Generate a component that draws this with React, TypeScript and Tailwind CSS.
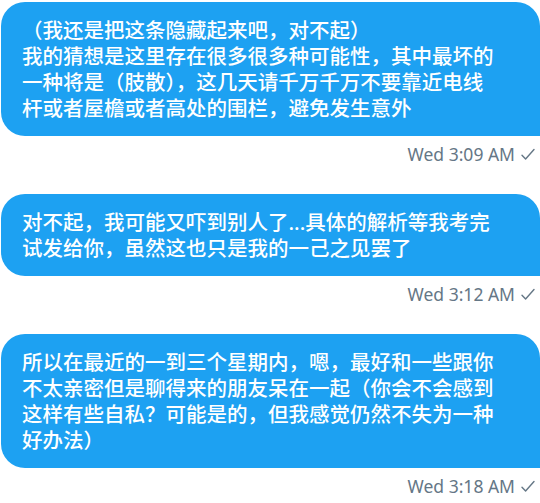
import { Fragment } from "react";

const messages = [
  {
    lines: [
      "（我还是把这条隐藏起来吧，对不起）",
      "我的猜想是这里存在很多很多种可能性，其中最坏的",
      "一种将是（肢散），这几天请千万千万不要靠近电线",
      "杆或者屋檐或者高处的围栏，避免发生意外",
    ],
    time: "Wed 3:09 AM",
  },
  {
    lines: [
      "对不起，我可能又吓到别人了...具体的解析等我考完",
      "试发给你，虽然这也只是我的一己之见罢了",
    ],
    time: "Wed 3:12 AM",
  },
  {
    lines: [
      "所以在最近的一到三个星期内，嗯，最好和一些跟你",
      "不太亲密但是聊得来的朋友呆在一起（你会不会感到",
      "这样有些自私？可能是的，但我感觉仍然不失为一种",
      "好办法）",
    ],
    time: "Wed 3:18 AM",
  },
];

function Check() {
  return (
    <svg width="14" height="13" viewBox="0 0 14 13" fill="none" className="ml-[6px]">
      <path d="M1 7.2 L4.6 11 L13 1.5" stroke="#657786" strokeWidth="1.4" strokeLinecap="round" strokeLinejoin="round" />
    </svg>
  );
}

export default function App() {
  return (
    <div
      className="w-[540px] h-[503px] bg-white overflow-hidden pt-[2px] pl-px"
      style={{ fontFamily: '"Noto Sans", "Noto Sans CJK SC", sans-serif' }}
    >
      <div className="flex flex-col">
        {messages.map((m, i) => (
          <div key={i} className={i > 0 ? "mt-[28px]" : ""}>
            <div className="bg-[#1da1f2] text-white font-medium rounded-[24px] rounded-br-none px-[21px] py-[15px] text-[20.5px] leading-[26px] whitespace-nowrap">
              {m.lines.map((l, j) => (
                <Fragment key={j}>
                  {l}
                  {j < m.lines.length - 1 && <br />}
                </Fragment>
              ))}
            </div>
            <div className="mt-[6px] h-[24px] flex items-center justify-end pr-[5px] text-[17.5px] leading-[24px] text-[#657786]">
              <span>{m.time}</span>
              <Check />
            </div>
          </div>
        ))}
      </div>
    </div>
  );
}
